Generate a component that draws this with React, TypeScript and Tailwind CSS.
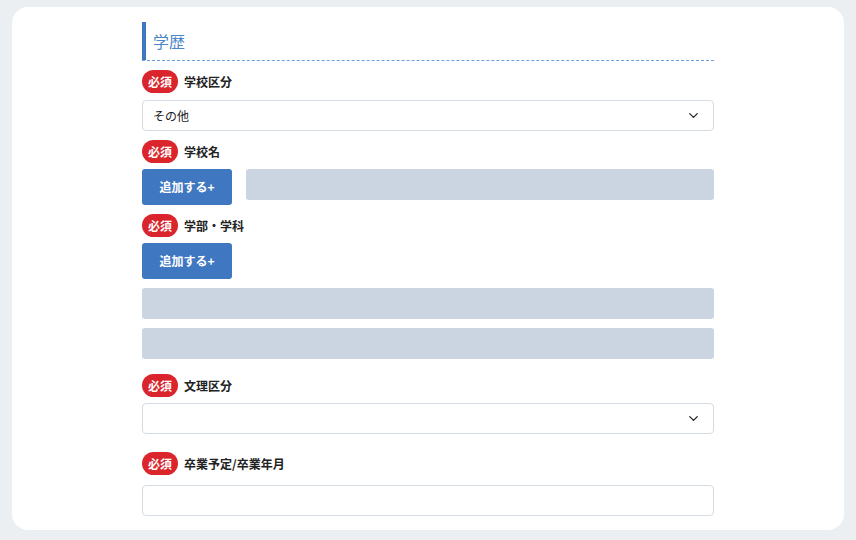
import { ChevronDown } from "lucide-react";

const font = { fontFamily: '"Noto Sans CJK JP", "Noto Sans", sans-serif' };

function Label({ text }: { text: string }) {
  return (
    <div className="flex h-[23px] items-center gap-[6px]">
      <span className="flex h-[23px] w-[36px] items-center justify-center rounded-full bg-[#d9252b] text-[12px] font-bold text-white">
        必須
      </span>
      <span className="text-[12px] font-bold text-[#222]">{text}</span>
    </div>
  );
}

function SelectBox({ value }: { value?: string }) {
  return (
    <div className="flex h-[31px] items-center justify-between rounded-[4px] border border-[#d6dce4] bg-white pl-[10px] pr-[12px]">
      <span className="text-[12px] text-[#222]">{value}</span>
      <ChevronDown className="h-[15px] w-[15px] text-[#222]" strokeWidth={2} />
    </div>
  );
}

function AddButton() {
  return (
    <button className="flex h-[36px] w-[90px] shrink-0 items-center justify-center rounded-[3px] bg-[#3f78c1] text-[12px] font-bold text-white">
      追加する+
    </button>
  );
}

function GrayField() {
  return <div className="h-[31px] rounded-[3px] bg-[#cbd5e1]" />;
}

export default function App() {
  return (
    <div className="min-h-[540px] bg-[#ebeff1] px-[12px] pt-[7px] pb-[10px]" style={font}>
      <div className="h-[523px] rounded-[16px] bg-white pt-[15px]">
        <div className="mx-auto w-[572px]">
          {/* Section title */}
          <div className="flex h-[39px] items-center border-b border-dashed border-[#6b9fd9]">
            <div className="flex h-full items-center border-l-[4px] border-[#3f78c1] pl-[7px] text-[16px] text-[#4a86c8]">
              学歴
            </div>
          </div>

          <div className="mt-[9px]">
            <Label text="学校区分" />
          </div>
          <div className="mt-[7px]">
            <SelectBox value="その他" />
          </div>

          <div className="mt-[9px]">
            <Label text="学校名" />
          </div>
          <div className="mt-[6px] flex gap-[14px]">
            <AddButton />
            <div className="flex-1">
              <GrayField />
            </div>
          </div>

          <div className="mt-[9px]">
            <Label text="学部・学科" />
          </div>
          <div className="mt-[6px]">
            <AddButton />
          </div>
          <div className="mt-[9px]">
            <GrayField />
          </div>
          <div className="mt-[9px]">
            <GrayField />
          </div>

          <div className="mt-[15px]">
            <Label text="文理区分" />
          </div>
          <div className="mt-[6px]">
            <SelectBox />
          </div>

          <div className="mt-[18px]">
            <Label text="卒業予定/卒業年月" />
          </div>
          <div className="mt-[10px] h-[31px] rounded-[4px] border border-[#d6dce4] bg-white" />
        </div>
      </div>
    </div>
  );
}
